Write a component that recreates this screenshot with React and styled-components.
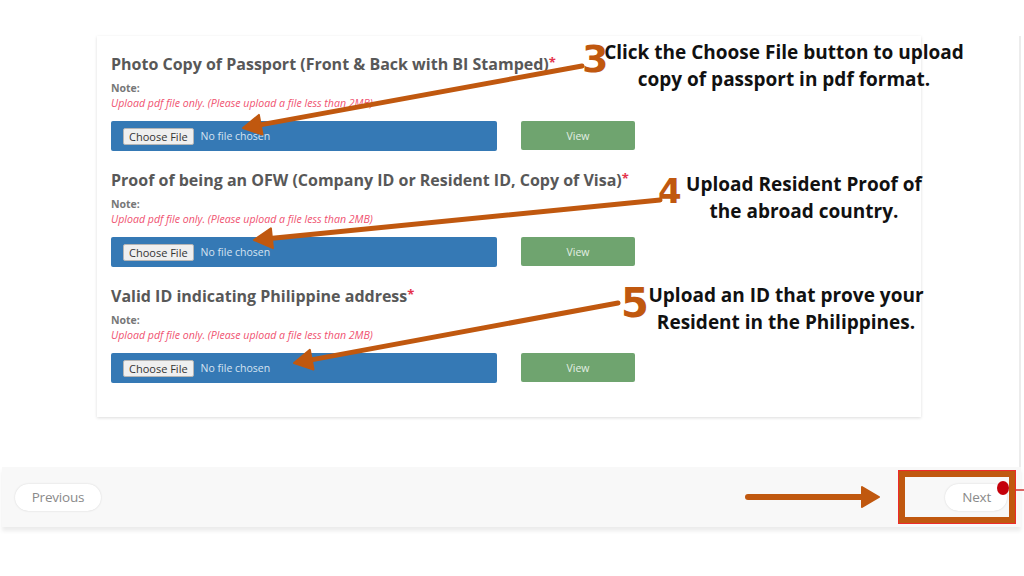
import React from "react";
import styled, { createGlobalStyle } from "styled-components";

const Global = createGlobalStyle`
  html, body { margin: 0; padding: 0; background: #ffffff; }
  body { font-family: "Open Sans", "Liberation Sans", sans-serif; }
  * { box-sizing: border-box; }
`;

const ORANGE = "#c0580f";

const Page = styled.div`
  position: relative;
  width: 1024px;
  height: 576px;
  overflow: hidden;
  background: #fff;
  padding-top: 36px;
`;

const Frame = styled.div`
  width: 1019px;
  margin-left: 2px;
  display: flex;
  flex-direction: column;
`;

const Content = styled.div`
  height: 431px;
  border-right: 2px solid #ececec;
  padding-left: 95px;
`;

const Card = styled.div`
  width: 824px;
  height: 381px;
  background: #fff;
  box-shadow: 0 1px 3px rgba(0, 0, 0, 0.14);
  padding: 16px 14px 0;
  display: flex;
  flex-direction: column;
  gap: 17px;
`;

const Section = styled.div`
  display: flex;
  flex-direction: column;
`;

const Title = styled.div`
  font-size: 16px;
  line-height: 20px;
  font-weight: 700;
  color: #585858;
  white-space: nowrap;
`;

const Star = styled.span`
  color: #e5334b;
  font-size: 13px;
  vertical-align: 3px;
`;

const Note = styled.div`
  margin-top: 7px;
  font-size: 10.5px;
  line-height: 14px;
  font-weight: 700;
  color: #777;
`;

const Hint = styled.div`
  margin-top: 1px;
  font-size: 10.6px;
  line-height: 14px;
  font-style: italic;
  color: #f05270;
  white-space: nowrap;
`;

const Row = styled.div`
  margin-top: 11px;
  display: flex;
  align-items: flex-start;
  gap: 24px;
`;

const FileBar = styled.div`
  width: 386px;
  height: 30px;
  background: #3579b5;
  border-radius: 2px;
  display: flex;
  align-items: center;
  padding-left: 12px;
  gap: 7px;
`;

const ChooseBtn = styled.div`
  height: 17px;
  padding: 0 5px;
  background: #efefef;
  border: 1px solid #b5b5b5;
  border-radius: 2px;
  font-size: 11px;
  line-height: 15px;
  color: #333;
`;

const NoFile = styled.span`
  font-size: 10.5px;
  color: #d6e4f2;
`;

const ViewBtn = styled.div`
  width: 114px;
  height: 29px;
  background: #6fa46f;
  border-radius: 2px;
  display: flex;
  align-items: center;
  justify-content: center;
  font-size: 10.5px;
  color: #e3efe3;
`;

const Footer = styled.div`
  height: 60px;
  background: #f8f8f8;
  box-shadow: 0 4px 4px rgba(0, 0, 0, 0.08);
  display: flex;
  align-items: center;
  justify-content: space-between;
  padding: 0 14px 0 13px;
`;

const NavBtn = styled.div`
  height: 27px;
  width: ${(p) => p.$w}px;
  background: #fff;
  border-radius: 14px;
  box-shadow: 0 0 2px rgba(0, 0, 0, 0.15);
  display: flex;
  align-items: center;
  justify-content: ${(p) => (p.$right ? "flex-end" : "center")};
  padding-right: ${(p) => (p.$right ? 16 : 0)}px;
  font-size: 13.5px;
  color: #8a8a8a;
  font-family: "Open Sans", sans-serif;
  letter-spacing: -0.2px;
`;

const Callout = styled.div`
  position: absolute;
  left: ${(p) => p.$cx - 220}px;
  top: ${(p) => p.$y}px;
  width: 440px;
  text-align: center;
  font-family: "Open Sans", Lato, sans-serif;
  font-weight: 700;
  font-size: 19px;
  line-height: 27px;
  color: #111;
  white-space: nowrap;
`;

const Numeral = styled.div`
  position: absolute;
  left: ${(p) => p.$x}px;
  top: ${(p) => p.$y}px;
  font-family: "DejaVu Sans", sans-serif;
  font-weight: 700;
  font-size: ${(p) => p.$s}px;
  line-height: 1;
  color: ${ORANGE};
`;

const Overlay = styled.svg`
  position: absolute;
  left: 0;
  top: 0;
  pointer-events: none;
`;

const HighlightBox = styled.div`
  position: absolute;
  left: 899px;
  top: 471px;
  width: 116px;
  height: 52px;
  border: 6px solid ${ORANGE};
  outline: 1px solid #ee2a2a;
`;

const Dot = styled.div`
  position: absolute;
  left: 997px;
  top: 481px;
  width: 12px;
  height: 14px;
  border-radius: 50%;
  background: #c4000a;
`;

function Arrow({ x1, y1, x2, y2, w = 5, head = 18, hw = 10 }) {
  const dx = x2 - x1;
  const dy = y2 - y1;
  const len = Math.hypot(dx, dy);
  const ux = dx / len;
  const uy = dy / len;
  const bx = x2 - ux * head;
  const by = y2 - uy * head;
  const px = -uy;
  const py = ux;
  const pts = `${x2},${y2} ${bx + px * hw},${by + py * hw} ${bx - px * hw},${by - py * hw}`;
  return (
    <g>
      <line x1={x1} y1={y1} x2={bx + ux * 2} y2={by + uy * 2} stroke={ORANGE} strokeWidth={w} strokeLinecap="round" />
      <polygon points={pts} fill={ORANGE} stroke={ORANGE} strokeWidth="2" strokeLinejoin="round" />
    </g>
  );
}

const sections = [
  { title: "Photo Copy of Passport (Front & Back with BI Stamped)" },
  { title: "Proof of being an OFW (Company ID or Resident ID, Copy of Visa)" },
  { title: "Valid ID indicating Philippine address" },
];

export default function App() {
  return (
    <>
      <Global />
      <Page>
        <Frame>
          <Content>
            <Card>
              {sections.map((s) => (
                <Section key={s.title}>
                  <Title>
                    {s.title}
                    <Star>*</Star>
                  </Title>
                  <Note>Note:</Note>
                  <Hint>Upload pdf file only. (Please upload a file less than 2MB)</Hint>
                  <Row>
                    <FileBar>
                      <ChooseBtn>Choose File</ChooseBtn>
                      <NoFile>No file chosen</NoFile>
                    </FileBar>
                    <ViewBtn>View</ViewBtn>
                  </Row>
                </Section>
              ))}
            </Card>
          </Content>
          <Footer>
            <NavBtn $w={86}>Previous</NavBtn>
            <NavBtn $w={62} $right>Next</NavBtn>
          </Footer>
        </Frame>

        <Overlay width="1024" height="576" viewBox="0 0 1024 576">
          <Arrow x1={582} y1={66} x2={243} y2={128} />
          <Arrow x1={660} y1={200} x2={254} y2={240} />
          <Arrow x1={618} y1={303} x2={294} y2={363} />
          <Arrow x1={748} y1={497} x2={879} y2={497} w={6} head={17} hw={10} />
          <line x1="1015" y1="490" x2="1024" y2="490" stroke="#d03030" strokeWidth="1.5" />
        </Overlay>

        <HighlightBox />
        <Dot />

        <Numeral $x={582} $y={40} $s={38}>3</Numeral>
        <Callout $cx={784} $y={39}>
          Click the Choose File button to upload
          <br />
          copy of passport in pdf format.
        </Callout>

        <Numeral $x={658} $y={174} $s={34}>4</Numeral>
        <Callout $cx={804} $y={171}>
          Upload Resident Proof of
          <br />
          the abroad country.
        </Callout>

        <Numeral $x={621} $y={283} $s={40}>5</Numeral>
        <Callout $cx={786} $y={282}>
          Upload an ID that prove your
          <br />
          Resident in the Philippines.
        </Callout>
      </Page>
    </>
  );
}
